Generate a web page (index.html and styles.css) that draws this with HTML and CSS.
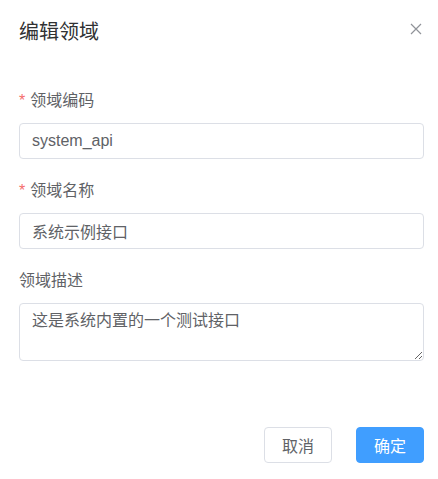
FILE: index.html
```html
<!DOCTYPE html>
<html lang="zh-CN">
<head>
<meta charset="utf-8">
<title>编辑领域</title>
<link rel="stylesheet" href="styles.css">
</head>
<body>
<div class="dialog">
  <div class="dialog-header">
    <span class="dialog-title">编辑领域</span>
    <button class="dialog-close" type="button" aria-label="关闭">
      <svg width="12" height="12" viewBox="0 0 12 12"><path d="M1 1L11 11M11 1L1 11" stroke="#909399" stroke-width="1.2" fill="none"/></svg>
    </button>
  </div>
  <form class="form">
    <div class="form-item">
      <label class="form-label"><span class="required">*</span>领域编码</label>
      <input class="input" type="text" value="system_api">
    </div>
    <div class="form-item">
      <label class="form-label"><span class="required">*</span>领域名称</label>
      <input class="input" type="text" value="系统示例接口">
    </div>
    <div class="form-item last">
      <label class="form-label">领域描述</label>
      <textarea class="textarea">这是系统内置的一个测试接口</textarea>
    </div>
  </form>
  <div class="dialog-footer">
    <button class="btn" type="button">取消</button>
    <button class="btn btn-primary" type="button">确定</button>
  </div>
</div>
</body>
</html>
```

FILE: styles.css
```css
html, body {
  margin: 0;
  padding: 0;
  background: #ffffff;
}

body {
  font-family: "Liberation Sans", "Noto Sans CJK SC", sans-serif;
  color: #606266;
}

.dialog {
  padding: 20px 14px 0 19px;
}

.dialog-header {
  display: flex;
  justify-content: space-between;
  align-items: flex-start;
  height: 24px;
}

.dialog-title {
  font-size: 20px;
  line-height: 24px;
  color: #303133;
}

.dialog-close {
  border: 0;
  background: transparent;
  padding: 0;
  margin: 3px 2px 0 0;
  width: 12px;
  height: 12px;
  display: flex;
  cursor: pointer;
}

.form {
  margin-top: 45px;
}

.form-item {
  display: flex;
  flex-direction: column;
  margin-bottom: 20px;
}

.form-item.last {
  margin-bottom: 0;
}

.form-label {
  font-size: 16px;
  line-height: 24px;
  margin-bottom: 10px;
  color: #606266;
}

.required {
  color: #f56c6c;
  margin-right: 5px;
}

.input,
.textarea {
  box-sizing: border-box;
  width: 100%;
  border: 1px solid #dcdfe6;
  border-radius: 4px;
  font-family: "Liberation Sans", "Noto Sans CJK SC", sans-serif;
  font-size: 16px;
  color: #606266;
  outline: none;
  margin: 0;
  background: #fff;
}

.input {
  height: 36px;
  padding: 0 12px;
  line-height: 34px;
}

.textarea {
  height: 58px;
  padding: 5px 12px;
  line-height: 24px;
  resize: vertical;
  display: block;
}

.dialog-footer {
  margin-top: 66px;
  display: flex;
  justify-content: flex-end;
  gap: 24px;
}

.btn {
  box-sizing: border-box;
  width: 68px;
  height: 36px;
  border: 1px solid #dcdfe6;
  border-radius: 4px;
  background: #fff;
  color: #606266;
  font-family: "Liberation Sans", "Noto Sans CJK SC", sans-serif;
  font-size: 16px;
  padding: 0;
  cursor: pointer;
}

.btn-primary {
  background: #409eff;
  border-color: #409eff;
  color: #fff;
}
```
